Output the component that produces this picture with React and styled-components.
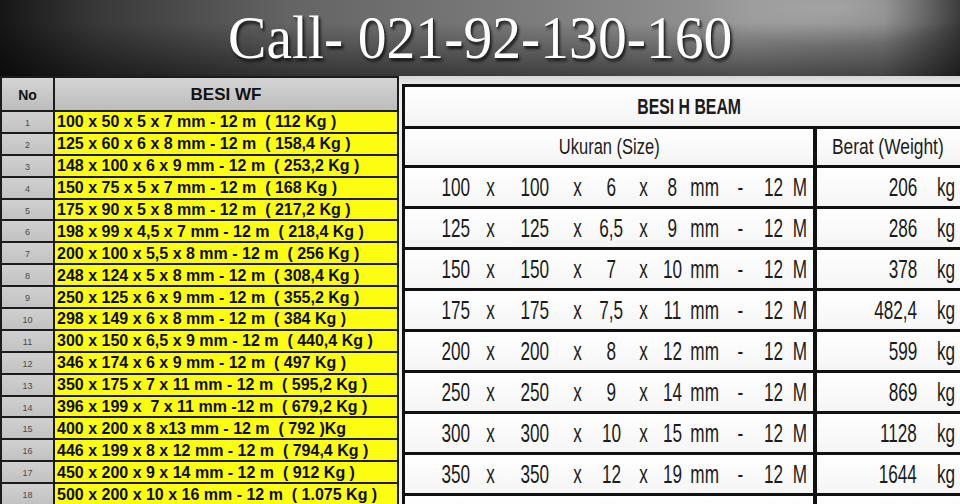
import React from 'react';
import styled, { createGlobalStyle } from 'styled-components';

const GlobalStyle = createGlobalStyle`
  html, body {
    margin: 0;
    padding: 0;
    overflow: hidden;
    background: #dcdcdc;
    font-family: 'Liberation Sans', Arial, sans-serif;
  }
`;

const Page = styled.div`
  width: 960px;
  height: 504px;
  overflow: hidden;
  display: flex;
  flex-direction: column;
`;

// dark silver banner with the phone number
const Banner = styled.header`
  height: 76px;
  flex: none;
  box-sizing: border-box;
  padding-top: 6px;
  text-align: center;
  background:
    radial-gradient(ellipse 200px 55px at 87% 10%, rgba(255, 255, 255, 0.22), transparent 70%),
    linear-gradient(180deg, rgba(0, 0, 0, 0) 30%, rgba(0, 0, 0, 0.5) 100%),
    linear-gradient(90deg, #161616 0%, #383838 10%, #646464 30%, #7c7c7c 55%, #959595 78%, #848484 92%, #383838 100%);
`;

const Title = styled.h1`
  margin: 0;
  display: inline-block;
  font-family: 'Liberation Serif', 'Times New Roman', serif;
  font-weight: 400;
  font-size: 62px;
  line-height: 62px;
  color: #fdfdfd;
  transform: scaleX(0.93);
  text-shadow: 1px 1px 0 #2a2a2a, 2px 3px 3px rgba(0, 0, 0, 0.75);
`;

const Body = styled.div`
  flex: 1;
  display: flex;
  min-height: 0;
`;

// left: BESI WF list
const WfTable = styled.div`
  width: 399px;
  flex: none;
  box-sizing: border-box;
  display: grid;
  grid-template-columns: 51px 1fr;
  grid-template-rows: 32px;
  grid-auto-rows: 19.9px;
  gap: 2px;
  padding: 2px 2px 0 2px;
  background: #1c1c1c;
  align-content: start;
`;

const WfHead = styled.div`
  display: flex;
  align-items: center;
  justify-content: center;
  padding-top: 2px;
  background: linear-gradient(180deg, #d4d4d4, #bcbcbc);
  color: #111;
  font-weight: 700;
  font-size: ${p => p.$size}px;
`;

const NoCell = styled.div`
  display: flex;
  align-items: center;
  justify-content: center;
  padding-top: 2px;
  background: linear-gradient(180deg, #d0d0d0, #c2c2c2);
  color: #4a4a4a;
  font-size: 9px;
`;

const WfCell = styled.div`
  display: flex;
  align-items: center;
  padding: 1px 0 0 2px;
  background: #fdfd12;
  color: #0d0d0d;
  font-weight: 700;
  font-size: 16px;
  white-space: pre;
  overflow: hidden;
`;

// right: BESI H BEAM table
const RightPanel = styled.div`
  flex: 1;
  padding: 8px 0 0 3px;
  background: linear-gradient(180deg, #d6d6d6 0px, #ececec 10px, #f2f2f2 100%);
  overflow: hidden;
`;

const HTable = styled.div`
  width: 560px;
  box-sizing: border-box;
  display: grid;
  grid-template-rows: 39px 36px;
  grid-auto-rows: 38px;
  row-gap: 3px;
  padding: 3px;
  background: #111;
  color: #1c1c1c;
`;

const TitleCell = styled.div`
  display: flex;
  align-items: center;
  justify-content: center;
  background: linear-gradient(180deg, #ffffff, #f3f3f3);
  font-weight: 700;
  font-size: 22px;
`;

const HRow = styled.div`
  display: grid;
  grid-template-columns: 408px 1fr;
  column-gap: 4px;
`;

const HeadCell = styled.div`
  display: flex;
  align-items: center;
  justify-content: ${p => (p.$left ? 'flex-start' : 'center')};
  padding-left: ${p => (p.$left ? '15px' : '0')};
  background: linear-gradient(180deg, #ffffff, #f4f4f4);
  font-size: 22px;
`;

const SizeCell = styled.div`
  display: grid;
  grid-template-columns: 34px 34px 56px 28px 40px 24px 34px 32px 38px 28px 26px;
  padding-left: 34px;
  justify-items: center;
  align-items: center;
  background: linear-gradient(180deg, #ffffff, #f5f5f5);
  font-size: 26px;
  line-height: 1;
`;

const WeightCell = styled.div`
  display: grid;
  grid-template-columns: 100px 1fr;
  align-items: center;
  background: linear-gradient(180deg, #ffffff, #f5f5f5);
  font-size: 26px;
  line-height: 1;
`;

const Num = styled.div`
  justify-self: end;
`;

const Unit = styled.div`
  justify-self: start;
  padding-left: 20px;
`;

const Token = styled.span`
  display: inline-block;
  white-space: nowrap;
  transform: scaleX(${p => p.$sx || 0.66});
  transform-origin: ${p => p.$origin || 'center'};
`;

const wfRows = [
  '100 x 50 x 5 x 7 mm - 12 m  ( 112 Kg )',
  '125 x 60 x 6 x 8 mm - 12 m  ( 158,4 Kg )',
  '148 x 100 x 6 x 9 mm - 12 m  ( 253,2 Kg )',
  '150 x 75 x 5 x 7 mm - 12 m  ( 168 Kg )',
  '175 x 90 x 5 x 8 mm - 12 m  ( 217,2 Kg )',
  '198 x 99 x 4,5 x 7 mm - 12 m  ( 218,4 Kg )',
  '200 x 100 x 5,5 x 8 mm - 12 m  ( 256 Kg )',
  '248 x 124 x 5 x 8 mm - 12 m  ( 308,4 Kg )',
  '250 x 125 x 6 x 9 mm - 12 m  ( 355,2 Kg )',
  '298 x 149 x 6 x 8 mm - 12 m  ( 384 Kg )',
  '300 x 150 x 6,5 x 9 mm - 12 m  ( 440,4 Kg )',
  '346 x 174 x 6 x 9 mm - 12 m  ( 497 Kg )',
  '350 x 175 x 7 x 11 mm - 12 m  ( 595,2 Kg )',
  '396 x 199 x  7 x 11 mm -12 m  ( 679,2 Kg )',
  '400 x 200 x 8 x13 mm - 12 m  ( 792 )Kg',
  '446 x 199 x 8 x 12 mm - 12 m  ( 794,4 Kg )',
  '450 x 200 x 9 x 14 mm - 12 m  ( 912 Kg )',
  '500 x 200 x 10 x 16 mm - 12 m  ( 1.075 Kg )',
  '588 x 300 x 12 x 20 mm - 12 m  ( 1.812 Kg )',
];

const hRows = [
  ['100', '100', '6', '8', '206'],
  ['125', '125', '6,5', '9', '286'],
  ['150', '150', '7', '10', '378'],
  ['175', '175', '7,5', '11', '482,4'],
  ['200', '200', '8', '12', '599'],
  ['250', '250', '9', '14', '869'],
  ['300', '300', '10', '15', '1128'],
  ['350', '350', '12', '19', '1644'],
  ['400', '400', '13', '21', '2064'],
];

const SizeRow = ({ h, b, tw, tf, weight }) => {
  const parts = [h, 'x', b, 'x', tw, 'x', tf, 'mm', '-', '12', 'M'];
  return (
    <HRow>
      <SizeCell>
        {parts.map((p, i) => (
          <Token key={i}>{p}</Token>
        ))}
      </SizeCell>
      <WeightCell>
        <Num><Token $origin="right">{weight}</Token></Num>
        <Unit><Token $origin="left">kg</Token></Unit>
      </WeightCell>
    </HRow>
  );
};

export default function App() {
  return (
    <>
      <GlobalStyle />
      <Page>
        <Banner>
          <Title>Call- 021-92-130-160</Title>
        </Banner>
        <Body>
          <WfTable>
            <WfHead $size={14}>No</WfHead>
            <WfHead $size={17}>BESI WF</WfHead>
            {wfRows.map((row, i) => (
              <React.Fragment key={i}>
                <NoCell>{i + 1}</NoCell>
                <WfCell>{row}</WfCell>
              </React.Fragment>
            ))}
          </WfTable>
          <RightPanel>
            <HTable>
              <TitleCell><Token $sx={0.72}>BESI H BEAM</Token></TitleCell>
              <HRow>
                <HeadCell><Token $sx={0.75}>Ukuran (Size)</Token></HeadCell>
                <HeadCell $left><Token $sx={0.79} $origin="left">Berat (Weight)</Token></HeadCell>
              </HRow>
              {hRows.map(([h, b, tw, tf, w]) => (
                <SizeRow key={h} h={h} b={b} tw={tw} tf={tf} weight={w} />
              ))}
            </HTable>
          </RightPanel>
        </Body>
      </Page>
    </>
  );
}
